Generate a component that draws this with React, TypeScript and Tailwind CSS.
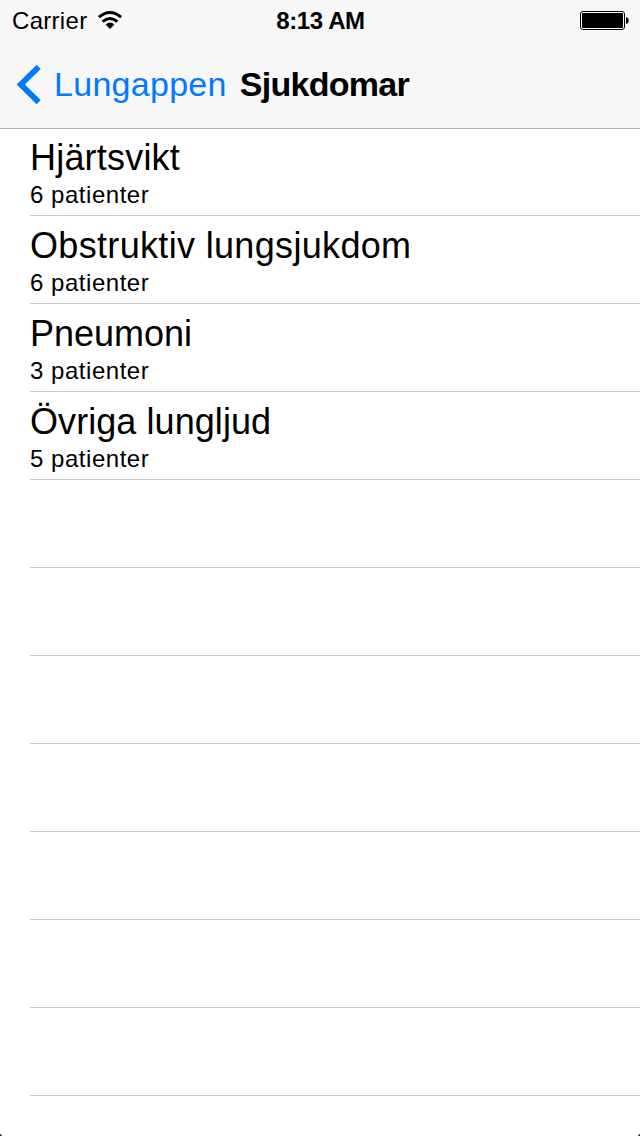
import React from "react";
import { clsx } from "clsx";

interface Disease {
  name: string;
  patients: number;
  tracking: string;
}

const diseases: Disease[] = [
  { name: "Hjärtsvikt", patients: 6, tracking: "tracking-[0.2px]" },
  { name: "Obstruktiv lungsjukdom", patients: 6, tracking: "tracking-[0.33px]" },
  { name: "Pneumoni", patients: 3, tracking: "tracking-normal" },
  { name: "Övriga lungljud", patients: 5, tracking: "tracking-[0.07px]" },
];

const EMPTY_ROWS = 7;

function WifiIcon() {
  return (
    <svg width="26" height="20" viewBox="0 0 26 20" className="ml-[10px]">
      <g fill="none" stroke="#000" strokeWidth="3">
        <path d="M1.9 7.2 Q13 -2.2 24.1 7.2" />
        <path d="M5.6 11.6 Q13 5.4 20.4 11.6" />
      </g>
      <path d="M8.6 14.6 Q13 10.4 17.4 14.6 L13 19 Z" fill="#000" />
    </svg>
  );
}

function BatteryIcon() {
  return (
    <svg width="49" height="19" viewBox="0 0 49 19">
      <rect x="0.5" y="0.5" width="44" height="18" rx="2.5" fill="#fff" stroke="#000" />
      <rect x="2" y="2" width="41" height="15" rx="1" fill="#000" />
      <path d="M46 6 C49.7 6.4 49.7 12.6 46 13 Z" fill="#000" />
    </svg>
  );
}

function StatusBar() {
  return (
    <div className="grid h-10 grid-cols-3 items-center pl-3 pr-[11px] text-2xl">
      <div className="flex items-center">
        <span className="pt-0.5 leading-9 tracking-[0.3px]">Carrier</span>
        <WifiIcon />
      </div>
      <span className="pt-0.5 text-center font-bold leading-9 tracking-[-0.4px]">8:13 AM</span>
      <div className="flex justify-end">
        <BatteryIcon />
      </div>
    </div>
  );
}

function NavBar() {
  return (
    <div className="flex h-[88px] items-center pl-4">
      <svg width="26" height="42" viewBox="0 0 26 42">
        <path d="M22.7 3.9 L4.8 21.5 L22.7 39.1" fill="none" stroke="#007aff" strokeWidth="5.8" />
      </svg>
      <span className="ml-3 text-[34px] leading-[44px] tracking-[0.28px] text-[#007aff]">Lungappen</span>
      <h1 className="ml-[13px] text-[34px] font-bold leading-[44px] tracking-[-0.7px]">Sjukdomar</h1>
    </div>
  );
}

function DiseaseRow({ disease }: { disease: Disease }) {
  return (
    <li className="h-[88px] border-b border-[#c8c7cc] pt-2">
      <h2 className={clsx("text-4xl leading-[44px]", disease.tracking)}>{disease.name}</h2>
      <p className="text-2xl leading-[30px] tracking-[0.53px]">{disease.patients} patienter</p>
    </li>
  );
}

export default function App() {
  return (
    <div className="relative h-[1136px] w-[640px] overflow-hidden bg-white font-['Liberation_Sans',Arial,sans-serif] text-black">
      <header className="relative z-10 h-[129px] border-b border-[#b2b2b2] bg-[#f7f7f7]">
        <StatusBar />
        <NavBar />
      </header>

      <ul className="-mt-px pl-[30px]">
        {diseases.map((disease) => (
          <DiseaseRow key={disease.name} disease={disease} />
        ))}
        {Array.from({ length: EMPTY_ROWS }, (_, i) => (
          <li key={i} className="h-[88px] border-b border-[#c8c7cc]" />
        ))}
      </ul>

      {/* Rounded screen corners */}
      <svg width="640" height="2" viewBox="0 0 640 2" className="absolute bottom-0 left-0">
        <path d="M0 0 H1 V1 H2 V2 H0 Z M640 0 H639 V1 H638 V2 H640 Z" fill="#404040" />
      </svg>
    </div>
  );
}
